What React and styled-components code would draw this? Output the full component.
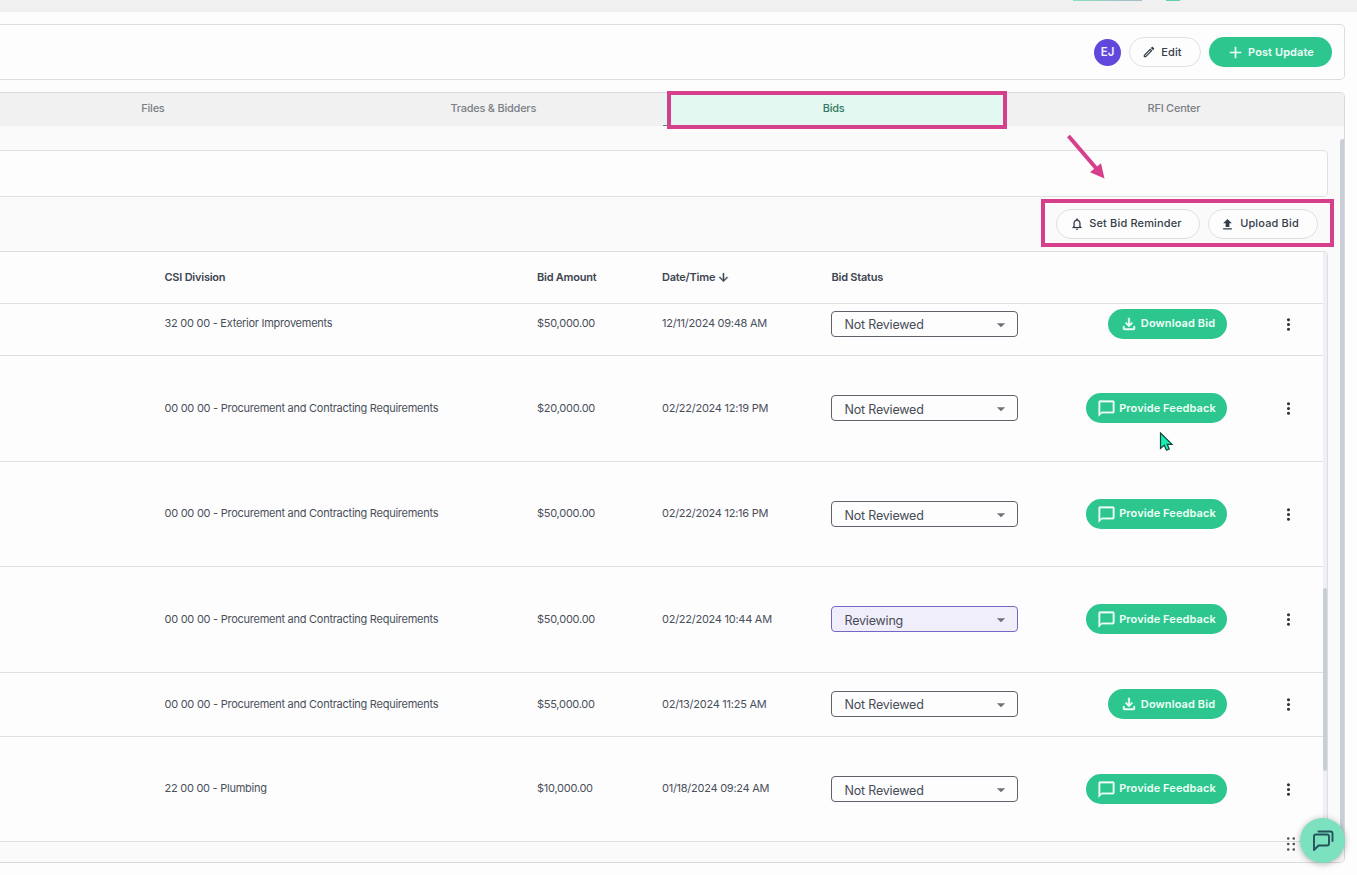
import React from "react";
import styled, { createGlobalStyle, css } from "styled-components";

const GlobalStyle = createGlobalStyle`
  * { box-sizing: border-box; }
  body {
    margin: 0;
    background: #fdfdfd;
    color: #3b4350;
    font-family: Inter, "Liberation Sans", sans-serif;
    font-size: 11px;
    line-height: 14px;
  }
`;

const Page = styled.div`
  position: relative;
  display: flex;
  flex-direction: column;
  width: 1357px;
  height: 875px;
  overflow: hidden;
`;

const TopBar = styled.div`
  display: flex;
  flex: none;
  justify-content: flex-end;
  gap: 24px;
  height: 12px;
  padding-right: 177px;
  background: #f0f0f1;
`;

const TopPill = styled.div`
  width: 69px;
  height: 1px;
  background: linear-gradient(90deg, #86dfc1, #a9b9c8);
`;

const TopDot = styled.div`
  width: 14px;
  height: 1px;
  background: #62cfa4;
`;

const HeaderCard = styled.header`
  display: flex;
  flex: none;
  align-items: center;
  justify-content: flex-end;
  gap: 8px;
  width: 1345px;
  height: 56px;
  margin-top: 12px;
  padding-right: 12px;
  border: 1px solid #dcdddf;
  border-left: 0;
  border-radius: 0 5px 5px 0;
`;

const Avatar = styled.div`
  display: flex;
  align-items: center;
  justify-content: center;
  width: 27px;
  height: 27px;
  border-radius: 50%;
  background: #6147db;
  color: #f3f0ff;
  font-size: 11.5px;
  font-weight: 600;
`;

const Button = styled.button`
  display: flex;
  flex: none;
  align-items: center;
  justify-content: center;
  gap: ${(p) => p.$gap ?? 5}px;
  width: ${(p) => p.$width}px;
  height: 30px;
  padding: 0 ${(p) => p.$padRight ?? 0}px 0 0;
  border-radius: 15px;
  font-family: inherit;
  font-size: 11px;
  font-weight: ${(p) => (p.$primary ? 600 : 500)};
  letter-spacing: ${(p) => (p.$primary ? 0.1 : 0.15)}px;
  white-space: nowrap;
  ${(p) =>
    p.$primary
      ? css`
          border: 0;
          background: #2ec68f;
          color: #effff8;
        `
      : css`
          border: 1px solid #dedfe1;
          background: #fdfdfd;
          color: #353d4a;
        `}
`;

const Label = styled.span`
  padding-bottom: ${(p) => (p.$lift ? 2 : 0)}px;
`;

const Panel = styled.main`
  position: relative;
  display: flex;
  flex: none;
  flex-direction: column;
  width: 1345px;
  height: 771px;
  margin-top: 12px;
  border: 1px solid #d9dadd;
  border-left: 0;
  border-radius: 0 5px 5px 0;
  background: #fafafa;
  overflow: hidden;
`;

const Tabs = styled.nav`
  display: flex;
  flex: none;
  justify-content: flex-end;
  height: 33px;
  background: #f1f1f1;
`;

const Tab = styled.div`
  display: flex;
  flex: none;
  align-items: center;
  justify-content: center;
  width: 340.3px;
  padding-bottom: ${(p) => (p.$active ? 2 : 3)}px;
  border-bottom: ${(p) => (p.$active ? "1px solid #3f9078" : "0")};
  background: ${(p) => (p.$active ? "#e3f8f0" : "transparent")};
  color: ${(p) => (p.$active ? "#347862" : "#7b7f86")};
  font-weight: 500;
  letter-spacing: -0.24px;
`;

const FilterCard = styled.section`
  flex: none;
  width: 1328px;
  height: 47px;
  margin-top: 24px;
  border: 1px solid #dfe0e2;
  border-left: 0;
  border-radius: 0 5px 5px 0;
  background: #fdfdfd;
`;

const Toolbar = styled.div`
  display: flex;
  flex: none;
  align-items: center;
  justify-content: flex-end;
  gap: 8px;
  width: 1318px;
  height: 54px;
`;

const TableFrame = styled.section`
  display: flex;
  flex: none;
  width: 1328px;
  height: 591px;
  border: 1px solid #dcdddf;
  border-left: 0;
  border-radius: 0 5px 0 0;
  background: #fdfdfd;
  overflow: hidden;
`;

const Table = styled.div`
  flex: 1;
`;

const InnerTrack = styled.div`
  width: 4px;
  padding-top: 336px;
  background: #edf1f4;
`;

const InnerThumb = styled.div`
  height: 183px;
  border-radius: 2px;
  background: #c9cdd4;
`;

const Row = styled.div`
  display: grid;
  grid-template-columns: 372.5px 125px 169px 187px 209px 1fr;
  align-items: center;
  height: ${(p) => p.$height}px;
  padding-left: 164.5px;
  padding-bottom: ${(p) => (p.$even ? 1 : 0)}px;
  border-bottom: ${(p) => (p.$last ? "0" : "1px solid #dedfe1")};
  overflow: hidden;
  color: #4a505b;
`;

const HeadCell = styled.div`
  display: flex;
  align-items: center;
  gap: 2px;
  padding-bottom: 1px;
  padding-left: ${(p) => p.$indent ?? 0}px;
  color: #3d4551;
  font-weight: 600;
  letter-spacing: -0.23px;
`;

const Cell = styled.div`
  padding-bottom: ${(p) => (p.$lift ? 2 : 0)}px;
  letter-spacing: -0.26px;
  white-space: nowrap;
`;

const Select = styled.div`
  display: flex;
  align-items: center;
  justify-content: space-between;
  width: 187px;
  height: 26px;
  padding: 0 7px 0 12.5px;
  border: 1px solid ${(p) => (p.$reviewing ? "#7765c4" : "#5d626b")};
  border-radius: 4px;
  background: ${(p) => (p.$reviewing ? "#f1eefc" : "#fdfdfd")};
  color: #474c56;
  font-size: 12.5px;
  letter-spacing: -0.2px;
  svg {
    margin-top: 1px;
    color: #6c7078;
  }
`;

const SelectText = styled.span`
  padding-top: ${(p) => (p.$drop ? 4 : 2)}px;
`;

const ActionCell = styled.div`
  display: flex;
  justify-content: flex-end;
`;

const MenuCell = styled.div`
  display: flex;
  padding-left: 52px;
  color: #30343c;
`;

const OuterThumb = styled.div`
  position: absolute;
  top: 46px;
  right: 0;
  width: 4px;
  height: 706px;
  border-radius: 3px 0 0 0;
  background: #cacfd7;
`;

const Highlight = styled.div`
  position: absolute;
  left: ${(p) => p.$x}px;
  top: ${(p) => p.$y}px;
  width: ${(p) => p.$w}px;
  height: ${(p) => p.$h}px;
  border: 4px solid #d63f8c;
`;

const Overlay = styled.svg`
  position: absolute;
  left: ${(p) => p.$x}px;
  top: ${(p) => p.$y}px;
`;

const DragHandle = styled.div`
  position: absolute;
  left: 1280px;
  top: 833px;
  display: flex;
  color: #4a4e54;
`;

const ChatButton = styled.button`
  position: absolute;
  left: 1300px;
  top: 818px;
  display: flex;
  align-items: center;
  justify-content: center;
  width: 45px;
  height: 45px;
  padding: 0;
  border: 0;
  border-radius: 50%;
  background: #7be1bf;
  color: #25535a;
  box-shadow: 0 1px 6px rgba(0, 0, 0, 0.3);
`;

const paths = {
  pencil:
    "M14.06,9L15,9.94L5.92,19H5V18.08L14.06,9M17.66,3C17.41,3 17.15,3.1 16.96,3.29L15.13,5.12L18.88,8.87L20.71,7.04C21.1,6.65 21.1,6 20.71,5.63L18.37,3.29C18.17,3.09 17.92,3 17.66,3M14.06,6.19L3,17.25V21H6.75L17.81,9.94L14.06,6.19Z",
  plus: "M20 13.2h-6.8V20h-2.4v-6.8H4v-2.4h6.8V4h2.4v6.8H20z",
  bell: "M12 22c1.1 0 2-.9 2-2h-4c0 1.1.9 2 2 2zm6-6v-5c0-3.07-1.63-5.64-4.5-6.32V4c0-.83-.67-1.5-1.5-1.5s-1.5.67-1.5 1.5v.68C7.64 5.36 6 7.92 6 11v5l-2 2v1h16v-1l-2-2zm-2 1H8v-6c0-2.48 1.51-4.5 4-4.5s4 2.02 4 4.5v6z",
  upload: "M5 20h14v-2H5v2zm0-10h4v6h6v-6h4l-7-7-7 7z",
  download:
    "M18 15v3H6v-3H4v3c0 1.1.9 2 2 2h12c1.1 0 2-.9 2-2v-3h-2zm-1-4-1.41-1.41L13 12.17V4h-2v8.17L8.41 9.59 7 11l5 5 5-5z",
  bubble:
    "M20 2H4c-1.1 0-2 .9-2 2v18l4-4h14c1.1 0 2-.9 2-2V4c0-1.1-.9-2-2-2zm0 14H6l-2 2V4h16v12z",
  more: "M12 8c1.1 0 2-.9 2-2s-.9-2-2-2-2 .9-2 2 .9 2 2 2zm0 2c-1.1 0-2 .9-2 2s.9 2 2 2 2-.9 2-2-.9-2-2-2zm0 6c-1.1 0-2 .9-2 2s.9 2 2 2 2-.9 2-2-.9-2-2-2z",
  caret: "M6.500 9.500l5.500 5.500 5.500-5.500z",
  down: "M20 12l-1.41-1.41L13 16.17V4h-2v12.17l-5.58-5.59L4 12l8 8 8-8z",
  drag: "M10.4 18a1.4 1.4 0 1 1-2.8 0 1.4 1.4 0 0 1 2.8 0zM10.4 12a1.4 1.4 0 1 1-2.8 0 1.4 1.4 0 0 1 2.8 0zM10.4 6a1.4 1.4 0 1 1-2.8 0 1.4 1.4 0 0 1 2.8 0zM16.4 18a1.4 1.4 0 1 1-2.8 0 1.4 1.4 0 0 1 2.8 0zM16.4 12a1.4 1.4 0 1 1-2.8 0 1.4 1.4 0 0 1 2.8 0zM16.4 6a1.4 1.4 0 1 1-2.8 0 1.4 1.4 0 0 1 2.8 0z",
};

const Icon = ({ name, size, stroke = 0 }) => (
  <svg
    width={size}
    height={size}
    viewBox="0 0 24 24"
    fill="currentColor"
    stroke={stroke ? "currentColor" : "none"}
    strokeWidth={stroke}
  >
    <path d={paths[name]} />
  </svg>
);

const procurement = "00 00 00 - Procurement and Contracting Requirements";

const bids = [
  { height: 52, lift: true, division: "32 00 00 - Exterior Improvements", amount: "$50,000.00", date: "12/11/2024 09:48 AM", status: "Not Reviewed", action: "Download Bid" },
  { height: 106, division: procurement, amount: "$20,000.00", date: "02/22/2024 12:19 PM", status: "Not Reviewed", action: "Provide Feedback" },
  { height: 105, lift: true, division: procurement, amount: "$50,000.00", date: "02/22/2024 12:16 PM", status: "Not Reviewed", action: "Provide Feedback" },
  { height: 106, division: procurement, amount: "$50,000.00", date: "02/22/2024 10:44 AM", status: "Reviewing", action: "Provide Feedback" },
  { height: 64, division: procurement, amount: "$55,000.00", date: "02/13/2024 11:25 AM", status: "Not Reviewed", action: "Download Bid" },
  { height: 104, lift: true, division: "22 00 00 - Plumbing", amount: "$10,000.00", date: "01/18/2024 09:24 AM", status: "Not Reviewed", action: "Provide Feedback" },
];

/* The first row is scrolled partly under the table head. */
const ScrolledRow = styled(Row)`
  grid-template-rows: 40px;
  align-content: start;
`;

function BidRow({ bid, first, last }) {
  const Wrapper = first ? ScrolledRow : Row;
  const download = bid.action === "Download Bid";
  return (
    <Wrapper $height={bid.height} $even={!bid.lift} $last={last}>
      <Cell $lift={bid.lift}>{bid.division}</Cell>
      <Cell $lift={bid.lift}>{bid.amount}</Cell>
      <Cell $lift={bid.lift}>{bid.date}</Cell>
      <Select $reviewing={bid.status === "Reviewing"}>
        <SelectText $drop={!download}>{bid.status}</SelectText>
        <Icon name="caret" size={18} />
      </Select>
      <ActionCell>
        <Button $primary $width={download ? 119 : 141} $gap={3}>
          <Icon name={download ? "download" : "bubble"} size={download ? 18 : 19} stroke={download ? 0.6 : 0.4} />
          <Label $lift={bid.lift}>{bid.action}</Label>
        </Button>
      </ActionCell>
      <MenuCell>
        <Icon name="more" size={19} />
      </MenuCell>
    </Wrapper>
  );
}

export default function App() {
  return (
    <>
      <GlobalStyle />
      <Page>
        <TopBar>
          <TopPill />
          <TopDot />
        </TopBar>
        <HeaderCard>
          <Avatar>EJ</Avatar>
          <Button $width={72} $gap={5} $padRight={6}>
            <Icon name="pencil" size={14} />
            <Label>Edit</Label>
          </Button>
          <Button $primary $width={123} $gap={4}>
            <Icon name="plus" size={17} />
            <Label>Post Update</Label>
          </Button>
        </HeaderCard>
        <Panel>
          <Tabs>
            <Tab>Files</Tab>
            <Tab>Trades &amp; Bidders</Tab>
            <Tab $active>Bids</Tab>
            <Tab>RFI Center</Tab>
          </Tabs>
          <FilterCard />
          <Toolbar>
            <Button $width={144} $gap={5} $padRight={4}>
              <Icon name="bell" size={14} stroke={0.3} />
              <Label $lift>Set Bid Reminder</Label>
            </Button>
            <Button $width={110} $gap={5} $padRight={7}>
              <Icon name="upload" size={15} />
              <Label $lift>Upload Bid</Label>
            </Button>
          </Toolbar>
          <TableFrame>
            <Table>
              <Row $height={52}>
                <HeadCell>CSI Division</HeadCell>
                <HeadCell>Bid Amount</HeadCell>
                <HeadCell>
                  Date/Time
                  <Icon name="down" size={13} stroke={0.8} />
                </HeadCell>
                <HeadCell $indent={0.5}>Bid Status</HeadCell>
              </Row>
              {bids.map((bid, i) => (
                <BidRow key={i} bid={bid} first={i === 0} last={i === bids.length - 1} />
              ))}
            </Table>
            <InnerTrack>
              <InnerThumb />
            </InnerTrack>
          </TableFrame>
          <OuterThumb />
        </Panel>

        <DragHandle>
          <Icon name="drag" size={22} />
        </DragHandle>
        <ChatButton>
          <svg width="24" height="24" viewBox="0 0 24 24" fill="none" stroke="currentColor" strokeWidth="1.9" strokeLinejoin="round" strokeLinecap="round">
            <path d="M3 21V7.5Q3 5.5 5 5.5H16Q18 5.5 18 7.5V14.5Q18 16.500 16 16.500H7.500Z" />
            <path d="M7.500 2.500H19.500Q21.500 2.500 21.500 4.500V12" />
          </svg>
        </ChatButton>

        <Highlight $x={667} $y={91} $w={340} $h={38} />
        <Highlight $x={1041} $y={199} $w={293} $h={48} />
        <Overlay $x={1064} $y={132} width="44" height="50" viewBox="0 0 44 50">
          <path d="M4.500 4L34.500 39" stroke="#d63f8c" strokeWidth="4" />
          <path d="M40.500 46.500L26 40.300L37 31.200Z" fill="#d63f8c" />
        </Overlay>
        <Overlay $x={1158} $y={430} width="18" height="23" viewBox="0 0 18 23">
          <path
            d="M2.500 3V18.500L6.200 15.300L8.500 20.300L11.300 19L9.200 14.300H14Z"
            fill="#14eeb2"
            stroke="#16463d"
            strokeWidth="1.200"
          />
        </Overlay>
      </Page>
    </>
  );
}
